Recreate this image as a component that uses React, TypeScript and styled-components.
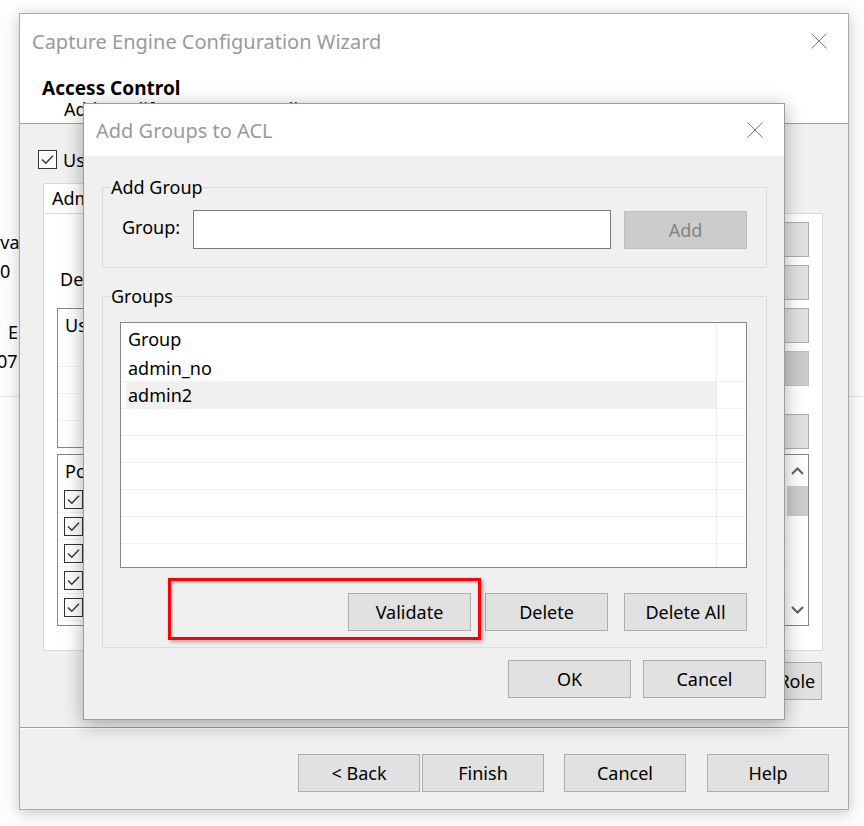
import React from "react";
import styled, { createGlobalStyle } from "styled-components";

const GlobalStyle = createGlobalStyle`
  html, body {
    margin: 0;
    padding: 0;
    background: #ffffff;
  }
  body {
    font-family: "Noto Sans", "Open Sans", sans-serif;
    font-size: 18px;
    color: #000;
  }
  * {
    box-sizing: border-box;
  }
`;

const Desktop = styled.div`
  position: relative;
  width: 864px;
  height: 826px;
  overflow: hidden;
  background: #ffffff;
`;

/* window behind everything, only its left edge shows */
const BackWindow = styled.div`
  position: absolute;
  inset: 0;
  z-index: 0;
  display: flex;
  flex-direction: column;
  background: #fdfdfd;
`;

const BackLabel = styled.div<{ $indent?: number; $top?: number }>`
  margin-left: ${(p) => p.$indent ?? 0}px;
  margin-top: ${(p) => p.$top ?? 0}px;
  line-height: 29px;
  white-space: nowrap;
`;

const BackRule = styled.div`
  margin-top: 20px;
  border-top: 1px solid #dfe5ec;
`;

/* wizard */
const Wizard = styled.div`
  position: absolute;
  left: 19px;
  top: 13px;
  z-index: 1;
  width: 830px;
  height: 797px;
  border: 1px solid #a9a9a9;
  background: #f0f0f0;
  box-shadow: 0 3px 14px rgba(0, 0, 0, 0.22);
  display: flex;
  flex-direction: column;
`;

const WizardHeader = styled.div`
  height: 110px;
  background: #ffffff;
  border-bottom: 1px solid #a0a0a0;
`;

const TitleBar = styled.div<{ $height: number; $padLeft: number; $padRight: number }>`
  height: ${(p) => p.$height}px;
  padding: 0 ${(p) => p.$padRight}px 0 ${(p) => p.$padLeft}px;
  display: flex;
  align-items: center;
  justify-content: space-between;
  background: #ffffff;
`;

const TitleText = styled.div`
  font-size: 20px;
  color: #9a9a9a;
  white-space: nowrap;
`;

const PageHeading = styled.div`
  margin: 9px 0 0 22px;
  font-size: 19px;
  font-weight: 700;
  line-height: 23px;
`;

const PageSubtitle = styled.div`
  margin: -2px 0 0 44px;
  line-height: 22px;
  white-space: nowrap;
`;

const WizardBody = styled.div`
  flex: 1;
  display: flex;
  flex-direction: column;
`;

const CheckRow = styled.div`
  display: flex;
  align-items: center;
  gap: 6px;
  margin: 26px 0 0 18px;
  height: 19px;
`;

const CheckBox = styled.span`
  width: 19px;
  height: 19px;
  border: 1px solid #333;
  background: #fff;
  display: inline-flex;
  align-items: center;
  justify-content: center;
  flex-shrink: 0;
`;

const TabControl = styled.div`
  margin: 14px 0 0 23px;
  width: 780px;
  display: flex;
  flex-direction: column;
`;

const TabStrip = styled.div`
  height: 30px;
  display: flex;
`;

const Tab = styled.div`
  padding: 2px 14px 0 8px;
  background: #fff;
  border: 1px solid #d9d9d9;
  border-bottom: 1px solid #fff;
  margin-bottom: -1px;
`;

const TabPage = styled.div`
  height: 438px;
  background: #fff;
  border: 1px solid #d9d9d9;
  padding: 8px 13px 0 13px;
  display: flex;
  flex-direction: column;
`;

const TopSection = styled.div`
  height: 226px;
  display: flex;
  gap: 20px;
`;

const LeftCol = styled.div`
  flex: 1;
  display: flex;
  flex-direction: column;
`;

const FieldLabel = styled.div`
  margin: 45px 0 0 3px;
  line-height: 24px;
`;

const ListBox = styled.div<{ $height: number; $top: number }>`
  margin-top: ${(p) => p.$top}px;
  height: ${(p) => p.$height}px;
  border: 1px solid #828790;
  background: #fff;
  display: flex;
  overflow: hidden;
`;

const ListRows = styled.div`
  flex: 1;
  display: flex;
  flex-direction: column;
`;

const ListRow = styled.div<{ $h: number; $line?: boolean; $pad?: number }>`
  height: ${(p) => p.$h}px;
  flex-shrink: 0;
  display: flex;
  align-items: center;
  gap: 8px;
  padding-left: ${(p) => p.$pad ?? 7}px;
  border-bottom: ${(p) => (p.$line ? "1px solid #f0f0f0" : "none")};
`;

const BtnCol = styled.div`
  width: 123px;
  display: flex;
  flex-direction: column;
`;

const Button = styled.button<{ $w?: number; $h?: number; $disabled?: boolean; $gap?: number }>`
  width: ${(p) => p.$w ?? 123}px;
  height: ${(p) => p.$h ?? 38}px;
  margin-top: ${(p) => p.$gap ?? 0}px;
  flex-shrink: 0;
  padding: 0;
  border-radius: 0;
  font: inherit;
  white-space: nowrap;
  background: ${(p) => (p.$disabled ? "#cccccc" : "#e1e1e1")};
  border: 1px solid ${(p) => (p.$disabled ? "#bfbfbf" : "#adadad")};
  color: ${(p) => (p.$disabled ? "#838383" : "#000")};
`;

const Scrollbar = styled.div`
  width: 21px;
  display: flex;
  flex-direction: column;
  align-items: center;
  background: #fff;
`;

const ScrollArrow = styled.div<{ $h: number }>`
  height: ${(p) => p.$h}px;
  display: flex;
  align-items: center;
  justify-content: center;
`;

const ScrollThumb = styled.div`
  width: 21px;
  height: 30px;
  background: #cdcdcd;
`;

const ScrollTrack = styled.div`
  flex: 1;
`;

const RoleRow = styled.div`
  display: flex;
  justify-content: flex-end;
  padding: 11px 26px 0 0;
`;

const WizardFooter = styled.div`
  height: 82px;
  border-top: 1px solid #a0a0a0;
  box-shadow: inset 0 1px 0 #ffffff;
  display: flex;
  justify-content: flex-end;
  align-items: flex-start;
  padding: 26px 19px 0 0;
`;

const ButtonGroup = styled.div<{ $gap: number }>`
  display: flex;
  gap: ${(p) => p.$gap}px;
`;

/* modal */
const Modal = styled.div`
  position: absolute;
  left: 83px;
  top: 103px;
  z-index: 2;
  width: 702px;
  height: 617px;
  border: 1px solid #9c9c9c;
  background: #f0f0f0;
  box-shadow: 0 4px 18px rgba(0, 0, 0, 0.32);
  display: flex;
  flex-direction: column;
`;

const ModalBody = styled.div`
  position: relative;
  flex: 1;
  padding: 19px 17px 0 18px;
  display: flex;
  flex-direction: column;
`;

const GroupBox = styled.fieldset<{ $top?: number; $pad: string }>`
  margin: ${(p) => p.$top ?? 0}px 0 0 0;
  padding: ${(p) => p.$pad};
  border: 1px solid #dcdcdc;
  min-inline-size: 0;
`;

const Legend = styled.legend<{ $shift: number }>`
  margin-left: ${(p) => p.$shift}px;
  padding: 0;
  line-height: 24px;
`;

const InputRow = styled.div`
  display: flex;
  align-items: center;
`;

const InputLabel = styled.div`
  width: 71px;
  padding-bottom: 5px;
`;

const TextInput = styled.div`
  width: 418px;
  height: 39px;
  background: #fff;
  border: 1px solid #7a7a7a;
  margin-right: 13px;
`;

const GroupsList = styled.div`
  height: 246px;
  border: 1px solid #828790;
  background: #fff;
  display: flex;
  overflow: hidden;
`;

const GroupRows = styled.div`
  width: 595px;
  display: flex;
  flex-direction: column;
`;

const GroupRow = styled.div<{ $h: number; $selected?: boolean; $line?: boolean }>`
  height: ${(p) => p.$h}px;
  flex-shrink: 0;
  display: flex;
  align-items: center;
  padding-left: 7px;
  background: ${(p) =>
    p.$selected ? "linear-gradient(to right, #fff 5px, #f0f0f0 5px)" : "#fff"};
  border-bottom: ${(p) => (p.$line ? "1px solid #f0f0f0" : "none")};
`;

const FillerCol = styled.div`
  flex: 1;
  border-left: 1px solid #ededed;
  display: flex;
  flex-direction: column;
`;

const FillerCell = styled.div<{ $h: number; $line?: boolean }>`
  height: ${(p) => p.$h}px;
  flex-shrink: 0;
  border-bottom: ${(p) => (p.$line ? "1px solid #f0f0f0" : "none")};
`;

const ActionRow = styled.div<{ $top: number; $right?: number }>`
  display: flex;
  justify-content: flex-end;
  margin-top: ${(p) => p.$top}px;
  padding-right: ${(p) => p.$right ?? 0}px;
`;

const Highlight = styled.div`
  position: absolute;
  left: 84px;
  top: 422px;
  width: 313px;
  height: 62px;
  border: 3px solid #ff0000;
  box-shadow: 2px 2px 4px rgba(0, 0, 0, 0.3), inset 1px 1px 3px rgba(0, 0, 0, 0.2);
  pointer-events: none;
`;

function CloseIcon() {
  return (
    <svg width="16" height="16" viewBox="0 0 16 16">
      <path d="M0.5 0.5 L15.5 15.5 M15.5 0.5 L0.5 15.5" stroke="#7a7a7a" strokeWidth="1" fill="none" />
    </svg>
  );
}

function Check() {
  return (
    <svg width="15" height="15" viewBox="0 0 15 15">
      <path d="M2 7.5 L5.8 11.2 L13 3.8" stroke="#333" strokeWidth="1.4" fill="none" />
    </svg>
  );
}

function Chevron({ up }: { up?: boolean }) {
  return (
    <svg width="13" height="8" viewBox="0 0 13 8">
      <path
        d={up ? "M1 7 L6.5 1.5 L12 7" : "M1 1 L6.5 6.5 L12 1"}
        stroke="#606060"
        strokeWidth="2"
        fill="none"
      />
    </svg>
  );
}

const policyRows = ["Read", "Write", "Delete", "Modify", "Execute"];
const groups = ["admin_no", "admin2"];

export default function App() {
  return (
    <>
      <GlobalStyle />
      <Desktop>
        <BackWindow>
          <BackLabel $top={228} $indent={-41}>Interval</BackLabel>
          <BackLabel>0</BackLabel>
          <BackLabel $top={32} $indent={8}>E</BackLabel>
          <BackLabel $indent={-3}>07</BackLabel>
          <BackRule />
        </BackWindow>

        <Wizard>
          <WizardHeader>
            <TitleBar $height={54} $padLeft={12} $padRight={21}>
              <TitleText>Capture Engine Configuration Wizard</TitleText>
              <CloseIcon />
            </TitleBar>
            <PageHeading>Access Control</PageHeading>
            <PageSubtitle>Add/modify group or user list</PageSubtitle>
          </WizardHeader>

          <WizardBody>
            <CheckRow>
              <CheckBox>
                <Check />
              </CheckBox>
              <span>Use access control</span>
            </CheckRow>
            <TabControl>
              <TabStrip>
                <Tab>Administration</Tab>
              </TabStrip>
              <TabPage>
                <TopSection>
                  <LeftCol>
                    <FieldLabel>Description:</FieldLabel>
                    <ListBox $top={17} $height={140}>
                      <ListRows>
                        <ListRow $h={31}>Users</ListRow>
                        <ListRow $h={27} $line />
                        <ListRow $h={27} $line />
                        <ListRow $h={27} $line />
                      </ListRows>
                    </ListBox>
                  </LeftCol>
                  <BtnCol>
                    <Button $h={35}>Add</Button>
                    <Button $h={35} $gap={8}>Edit</Button>
                    <Button $h={35} $gap={8}>Copy</Button>
                    <Button $h={35} $gap={8} $disabled>Apply</Button>
                    <Button $h={35} $gap={28}>Import</Button>
                  </BtnCol>
                </TopSection>
                <ListBox $top={6} $height={172}>
                  <ListRows>
                    <ListRow $h={31}>Policies</ListRow>
                    {policyRows.map((r) => (
                      <ListRow key={r} $h={27} $line $pad={6}>
                        <CheckBox>
                          <Check />
                        </CheckBox>
                        <span>{r}</span>
                      </ListRow>
                    ))}
                  </ListRows>
                  <Scrollbar>
                    <ScrollArrow $h={31}>
                      <Chevron up />
                    </ScrollArrow>
                    <ScrollThumb />
                    <ScrollTrack />
                    <ScrollArrow $h={30}>
                      <Chevron />
                    </ScrollArrow>
                  </Scrollbar>
                </ListBox>
              </TabPage>
            </TabControl>
            <RoleRow>
              <Button>Remove Role</Button>
            </RoleRow>
          </WizardBody>

          <WizardFooter>
            <ButtonGroup $gap={20}>
              <ButtonGroup $gap={2}>
                <Button $w={122}>&lt; Back</Button>
                <Button $w={122}>Finish</Button>
              </ButtonGroup>
              <ButtonGroup $gap={21}>
                <Button $w={122}>Cancel</Button>
                <Button $w={122}>Help</Button>
              </ButtonGroup>
            </ButtonGroup>
          </WizardFooter>
        </Wizard>

        <Modal>
          <TitleBar $height={52} $padLeft={12} $padRight={21}>
            <TitleText>Add Groups to ACL</TitleText>
            <CloseIcon />
          </TitleBar>
          <ModalBody>
            <GroupBox $pad="11px 19px 18px 19px">
              <Legend $shift={-11}>Add Group</Legend>
              <InputRow>
                <InputLabel>Group:</InputLabel>
                <TextInput />
                <Button $disabled>Add</Button>
              </InputRow>
            </GroupBox>

            <GroupBox $top={16} $pad="14px 19px 16px 17px">
              <Legend $shift={-9}>Groups</Legend>
              <GroupsList>
                <GroupRows>
                  <GroupRow $h={32}>Group</GroupRow>
                  {groups.map((g) => (
                    <GroupRow key={g} $h={27} $line $selected={g === "admin2"}>
                      {g}
                    </GroupRow>
                  ))}
                  {[0, 1, 2, 3, 4].map((i) => (
                    <GroupRow key={i} $h={27} $line />
                  ))}
                </GroupRows>
                <FillerCol>
                  <FillerCell $h={32} />
                  {[0, 1, 2, 3, 4, 5, 6].map((i) => (
                    <FillerCell key={i} $h={27} $line />
                  ))}
                </FillerCol>
              </GroupsList>
              <ActionRow $top={25}>
                <ButtonGroup $gap={14}>
                  <Button>Validate</Button>
                  <Button>Delete</Button>
                </ButtonGroup>
                <Button style={{ marginLeft: 16 }}>Delete All</Button>
              </ActionRow>
            </GroupBox>

            <ActionRow $top={12} $right={1}>
              <ButtonGroup $gap={12}>
                <Button>OK</Button>
                <Button>Cancel</Button>
              </ButtonGroup>
            </ActionRow>
            <Highlight />
          </ModalBody>
        </Modal>
      </Desktop>
    </>
  );
}
